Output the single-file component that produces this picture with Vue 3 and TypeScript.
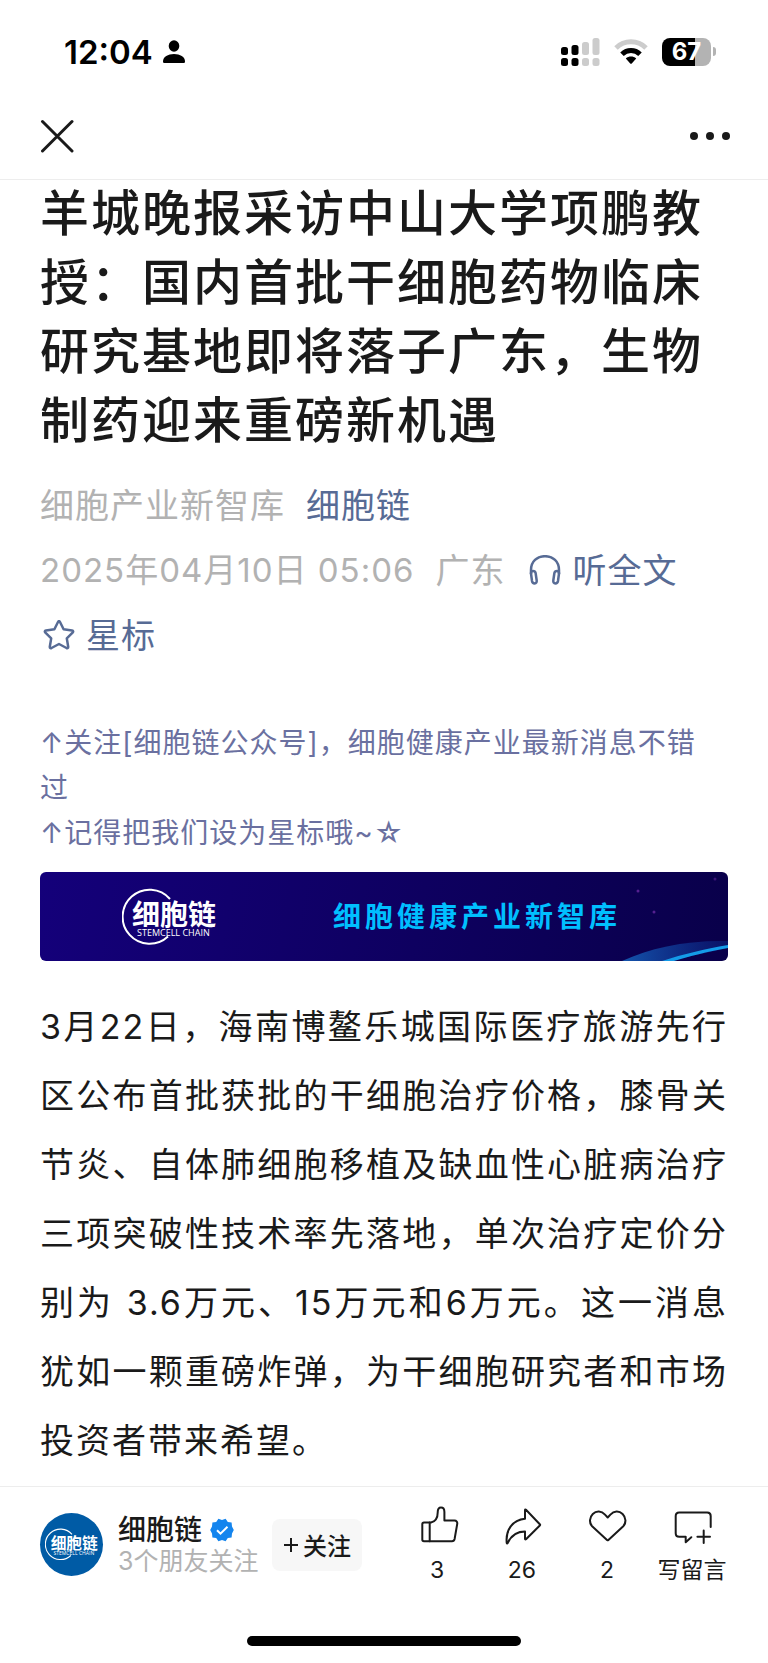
<script setup lang="ts">
import { ref } from 'vue'

interface Action {
  id: string
  label: string
  caption: string
  paths: string[]
}

const titleText = '羊城晚报采访中山大学项鹏教授：国内首批干细胞药物临床研究基地即将落子广东，生物制药迎来重磅新机遇'
const notes: string[] = [
  '↑关注[细胞链公众号]，细胞健康产业最新消息不错',
  '过',
  '↑记得把我们设为星标哦~☆',
]
const bodyText =
  '3月22日，海南博鳌乐城国际医疗旅游先行区公布首批获批的干细胞治疗价格，膝骨关节炎、自体肺细胞移植及缺血性心脏病治疗三项突破性技术率先落地，单次治疗定价分别为 3.6万元、15万元和6万元。这一消息犹如一颗重磅炸弹，为干细胞研究者和市场投资者带来希望。'

const actions: Action[] = [
  {
    id: 'like',
    label: '赞',
    caption: '3',
    paths: [
      'M7 16.500H14C18 15.500 20.700 12 20.700 6.500C20.700 3 22 1.600 24 1.600C26.200 1.600 27.400 3.400 27.400 6V14.600H37.500C39.500 14.600 40.600 16 40.200 18L37.600 33C37.300 34.500 36.400 35.200 35 35.200H7C5.900 35.200 5.300 34.600 5.300 33.500V18.200C5.300 17.100 5.900 16.500 7 16.500Z',
      'M12.700 16.500V35.200',
    ],
  },
  {
    id: 'share',
    label: '分享',
    caption: '26',
    paths: [
      'M23 4.200C23 3.400 23.500 3.300 24 3.800L37.800 18.200C38.300 18.700 38.300 19 37.800 19.500L24 33.300C23.500 33.700 23 33.500 23 32.800V25.400C15 25.400 9.500 28.500 5.700 37C5.300 37.800 4.800 37.600 4.700 36.800C3.500 24 10.500 14 23 12.800Z',
    ],
  },
  {
    id: 'wow',
    label: '推荐',
    caption: '2',
    paths: [
      'M20.700 11.500L18 8.600C14.500 4.800 9.300 4.600 5.800 8C2.200 11.600 2 17 5.400 20.600L20 34C20.500 34.400 20.900 34.400 21.400 34L36 20.600C39.400 17 39.200 11.600 35.600 8C32.100 4.600 26.900 4.800 23.400 8.600Z',
    ],
  },
  {
    id: 'comment',
    label: '写留言',
    caption: '写留言',
    paths: [
      'M38.700 21V10C38.700 7.800 37.500 6.500 35.300 6.500H7.200C5 6.500 3.700 7.800 3.700 10V27.300C3.700 29.500 5 30.800 7.200 30.800H13.700V36.200L19.300 31.200',
      'M31.700 24.500V37M25.400 30.800H38',
    ],
  },
]

const starred = ref(false)
const following = ref(false)
</script>

<template>
  <div class="page" lang="zh-CN">
    <header class="top">
      <div class="status">
        <div class="status-left">
          <time class="clock">12:04</time>
          <svg class="person" viewBox="0 0 22 24" aria-hidden="true">
            <ellipse cx="11" cy="6" rx="5.3" ry="5.8" />
            <path d="M0 21.5C0 16.8 5 14 11 14S22 16.8 22 21.5C22 22.6 21.4 23 20.4 23H1.6C.6 23 0 22.6 0 21.5Z" />
          </svg>
        </div>
        <div class="status-right">
          <svg class="signal" viewBox="0 0 40 28" aria-hidden="true">
            <g>
              <rect x="1" y="9" width="7" height="8" rx="2.5" />
              <rect x="11.5" y="7" width="7" height="10" rx="2.5" />
              <rect x="1" y="20" width="7" height="8" rx="2.5" />
              <rect x="11.5" y="20" width="7" height="8" rx="2.5" />
            </g>
            <g class="dim">
              <rect x="22" y="4" width="7" height="13" rx="2.5" />
              <rect x="32.5" y="0" width="7" height="17" rx="2.5" />
              <rect x="22" y="20" width="7" height="8" rx="2.5" />
              <rect x="32.5" y="20" width="7" height="8" rx="2.5" />
            </g>
          </svg>
          <svg class="wifi" viewBox="0 0 34 26" aria-hidden="true">
            <path class="arc dim-arc" d="M2 9C10.5 .8 23.5 .8 32 9" />
            <path class="arc" d="M8 15.2C13 10.3 21 10.3 26 15.2" />
            <path d="M11.8 19.5C14.8 16.9 19.2 16.9 22.2 19.5L18 24.3C17.4 25 16.6 25 16 24.3Z" />
          </svg>
          <span class="battery"><span class="charge">67</span><i class="nub"></i></span>
        </div>
      </div>
      <nav class="nav">
        <button type="button" aria-label="关闭">
          <svg class="close" viewBox="0 0 34 34" aria-hidden="true"><path d="M2.5 2.500L32 32M32 2.500L2.5 32" /></svg>
        </button>
        <button type="button" aria-label="更多">
          <svg class="more" viewBox="0 0 40 10" aria-hidden="true">
            <circle cx="4" cy="5" r="4" /><circle cx="20" cy="5" r="4" /><circle cx="36" cy="5" r="4" />
          </svg>
        </button>
      </nav>
    </header>

    <main class="article">
      <h1 class="title">{{ titleText }}</h1>

      <div class="meta">
        <span>细胞产业新智库</span>
        <a href="#account">细胞链</a>
        <i class="line-end"></i>
        <time class="published">2025年04月10日 05:06</time>
        <span>广东</span>
        <button type="button" class="meta-btn">
          <svg class="meta-icon" viewBox="0 0 32 32" aria-hidden="true">
            <path d="M2 19V15C2 6.500 8 1.200 16 1.200S30 6.500 30 15V19" />
            <path d="M2 18.500Q2 16 4 16Q6.200 16 6.600 18L7.700 25.500Q8 28.200 5.600 28.400Q3.400 28.400 3 26Z" />
            <path d="M30 18.500Q30 16 28 16Q25.800 16 25.400 18L24.300 25.500Q24 28.200 26.400 28.400Q28.600 28.400 29 26Z" />
          </svg>
          听全文
        </button>
        <button type="button" class="meta-btn" :aria-pressed="starred" @click="starred = !starred">
          <svg class="meta-icon" :class="{ filled: starred }" viewBox="2 3 32 32" aria-hidden="true">
            <path d="M17 5Q18 3.200 19 5L22.600 12.200L31 13.500Q33 14 31.600 15.600L25.800 21.400L27.200 29.800Q27.300 31.800 25.500 31L18 27L10.500 31Q8.700 31.800 8.800 29.800L10.200 21.400L4.400 15.600Q3 14 5 13.500L13.400 12.200Z" />
          </svg>
          星标
        </button>
      </div>

      <div class="notes">
        <p v-for="note in notes" :key="note">{{ note }}</p>
      </div>

      <section class="banner">
        <svg class="streak" viewBox="0 0 120 89" aria-hidden="true">
          <defs>
            <linearGradient id="glow" x1="0" y1="0" x2="1" y2="0">
              <stop offset="0" stop-color="#1560b8" stop-opacity="0.9" />
              <stop offset="1" stop-color="#0c2c90" stop-opacity="0.4" />
            </linearGradient>
          </defs>
          <path d="M14 89C42 76 78 68 120 69V76L60 89Z" fill="url(#glow)" />
          <path d="M54 89C76 82 96 77 120 73V76C98 80 82 84 66 89Z" fill="#149be8" />
          <circle cx="30" cy="19" r="1.5" fill="#552090" />
          <circle cx="46" cy="40" r="1.5" fill="#552090" />
          <circle cx="107" cy="7" r="1.5" fill="#3a1478" />
        </svg>
        <svg class="brand" viewBox="0 0 96 58" role="img" aria-label="细胞链 STEMCELL CHAIN">
          <path d="M48 11A27 27 0 1 0 46 48.5" />
          <text class="brand-name" x="10" y="37">细胞链</text>
          <text class="brand-sub" x="15" y="48">STEMCELL CHAIN</text>
        </svg>
        <p class="slogan">细胞健康产业新智库</p>
      </section>

      <p class="body">{{ bodyText }}</p>
    </main>

    <footer class="bottom">
      <div class="bar">
        <span class="avatar">
          <svg class="brand" viewBox="0 0 96 58" aria-hidden="true">
            <path d="M48 11A27 27 0 1 0 46 48.5" />
            <text class="brand-name" x="10" y="37">细胞链</text>
            <text class="brand-sub" x="15" y="48">STEMCELL CHAIN</text>
          </svg>
        </span>
        <div class="account">
          <div class="name">
            细胞链
            <svg class="verified" viewBox="0 0 24 24" aria-hidden="true">
              <path class="seal" d="M12 2L15.600 .8L17.800 4L21.600 4.400L22 8.400L23.800 12L22 15.600L21.600 19.600L17.800 20L15.600 23.200L12 22L8.400 23.200L6.200 20L2.400 19.600L2 15.600L.2 12L2 8.400L2.400 4.400L6.200 4L8.400 .8Z" />
              <path class="tick" d="M7 12.200L10.500 15.700L17.500 8.800" />
            </svg>
          </div>
          <div class="friends">3个朋友关注</div>
        </div>
        <button type="button" class="follow" :aria-pressed="following" @click="following = !following">
          <svg class="plus" viewBox="0 0 14 14" aria-hidden="true"><path d="M7 0V14M0 7H14" /></svg>
          关注
        </button>
        <div class="actions">
          <button v-for="a in actions" :key="a.id" type="button" class="action" :aria-label="a.label">
            <svg class="action-icon" viewBox="0 0 40 40" aria-hidden="true">
              <path v-for="d in a.paths" :key="d" :d="d" />
            </svg>
            <span>{{ a.caption }}</span>
          </button>
        </div>
      </div>
      <div class="home"><i></i></div>
    </footer>
  </div>
</template>

<style>
body {
  background: #fff;
}
</style>

<style scoped>
.page {
  min-height: 100vh;
  display: flex;
  flex-direction: column;
  background: #fff;
  color: #1a1a1a;
  font-family: Inter, "Noto Sans CJK SC", sans-serif;
}
h1, p {
  margin: 0;
}
button {
  margin: 0;
  padding: 0;
  border: 0;
  background: none;
  color: inherit;
  font: inherit;
  letter-spacing: inherit;
  cursor: pointer;
}
svg {
  display: block;
  flex: none;
}

.top {
  box-shadow: 0 1px 0 #ededed;
}
.status {
  box-sizing: border-box;
  height: 93px;
  padding: 10px 52px 0 64px;
  display: flex;
  align-items: center;
  justify-content: space-between;
  color: #000;
}
.status-left {
  display: flex;
  align-items: center;
  gap: 10px;
}
.clock {
  font-size: 33px;
  line-height: 40px;
  font-weight: 600;
}
.person {
  width: 22px;
  height: 24px;
}
.status-right {
  display: flex;
  align-items: center;
  gap: 14px;
}
.signal {
  width: 40px;
  height: 28px;
}
.dim {
  fill: #ccc;
}
.wifi {
  width: 34px;
  height: 26px;
}
.arc {
  fill: none;
  stroke: #000;
  stroke-width: 5;
}
.dim-arc {
  stroke: #ccc;
}
.battery {
  display: flex;
  align-items: center;
  gap: 2px;
}
.charge {
  width: 49px;
  height: 28px;
  border-radius: 8px;
  background: linear-gradient(90deg, #000 67%, #b3b3b3 67%);
  color: #fff;
  font-size: 24px;
  line-height: 28px;
  font-weight: 700;
  text-align: center;
}
.nub {
  width: 3px;
  height: 9px;
  border-radius: 0 3px 3px 0;
  background: #b3b3b3;
}
.nav {
  height: 86px;
  padding: 0 38px 0 40px;
  display: flex;
  align-items: center;
  justify-content: space-between;
}
.close {
  width: 34px;
  height: 34px;
  fill: none;
  stroke: #1a1a1a;
  stroke-width: 3;
  stroke-linecap: round;
}
.more {
  width: 40px;
  height: 10px;
  fill: #1a1a1a;
}

.article {
  padding: 0 40px;
}
.title {
  font-size: 49px;
  line-height: 69px;
  font-weight: 500;
  letter-spacing: 2px;
}
.meta {
  margin-top: 18px;
  display: flex;
  flex-wrap: wrap;
  column-gap: 21px;
  font-size: 34px;
  line-height: 65px;
  letter-spacing: 1px;
  color: #b2b2b2;
}
.line-end {
  flex-basis: 100%;
}
.published {
  font-size: 33px;
}
.meta a,
.meta-btn {
  color: #576b95;
  text-decoration: none;
}
.meta-btn {
  padding-left: 3px;
  display: flex;
  align-items: center;
  gap: 11px;
}
.meta-icon {
  width: 32px;
  height: 32px;
  fill: none;
  stroke: currentColor;
  stroke-width: 2.5;
  stroke-linejoin: round;
}
.meta-icon.filled {
  fill: currentColor;
}
.notes {
  margin-top: 53px;
  font-size: 28px;
  line-height: 45px;
  letter-spacing: 1px;
  color: #6a70a0;
}
.banner {
  position: relative;
  margin-top: 16px;
  height: 89px;
  border-radius: 6px;
  overflow: hidden;
  display: flex;
  align-items: center;
  background: linear-gradient(100deg, #14007a, #0e0060 55%, #09004a);
}
.streak {
  position: absolute;
  right: 0;
  bottom: 0;
  width: 120px;
  height: 89px;
}
.brand {
  width: 96px;
  height: 58px;
}
.banner .brand {
  margin-left: 82px;
}
.brand path {
  fill: none;
  stroke: #fff;
  stroke-width: 2;
}
.brand text {
  fill: #fff;
}
.brand-name {
  font: 700 28px "Noto Sans CJK SC", sans-serif;
}
.brand-sub {
  font: 9px "Open Sans", sans-serif;
}
.slogan {
  margin-left: 115px;
  font-size: 28px;
  line-height: 40px;
  font-weight: 700;
  letter-spacing: 4px;
  color: #00bfff;
}
.body {
  margin-top: 31px;
  font-size: 34px;
  line-height: 69px;
  letter-spacing: 2px;
  text-align: justify;
}

.bottom {
  margin-top: auto;
  border-top: 1px solid #ededed;
}
.bar {
  height: 115px;
  padding: 0 40px;
  display: flex;
  align-items: center;
}
.avatar {
  flex: none;
  width: 63px;
  height: 63px;
  border-radius: 50%;
  background: #005ba5;
  display: flex;
  align-items: center;
  justify-content: center;
}
.avatar .brand {
  width: 54px;
  height: 33px;
}
.account {
  margin-left: 15px;
  white-space: nowrap;
}
.name {
  display: flex;
  align-items: center;
  gap: 8px;
  font-size: 28px;
  line-height: 32px;
  font-weight: 500;
}
.verified {
  width: 24px;
  height: 24px;
}
.seal {
  fill: #1485ee;
}
.tick {
  fill: none;
  stroke: #fff;
  stroke-width: 2;
}
.friends {
  font-size: 25px;
  line-height: 30px;
  color: #b2b2b2;
}
.follow {
  flex: none;
  margin-left: 14px;
  width: 90px;
  height: 52px;
  border-radius: 8px;
  background: #f7f7f7;
  display: flex;
  align-items: center;
  justify-content: center;
  gap: 5px;
  font-size: 24px;
  font-weight: 500;
}
.plus {
  width: 14px;
  height: 14px;
  stroke: #1a1a1a;
  stroke-width: 2;
}
.actions {
  margin-left: auto;
  display: grid;
  grid-template-columns: repeat(4, 72px);
  column-gap: 13px;
}
.action {
  display: flex;
  flex-direction: column;
  align-items: center;
  gap: 10px;
  font-size: 23px;
  line-height: 28px;
}
.action-icon {
  width: 40px;
  height: 40px;
  overflow: visible;
  fill: none;
  stroke: #1a1a1a;
  stroke-width: 2;
  stroke-linejoin: round;
  stroke-linecap: round;
}
.home {
  height: 61px;
  display: flex;
  align-items: flex-end;
  justify-content: center;
}
.home i {
  width: 274px;
  height: 10px;
  margin-bottom: 17px;
  border-radius: 5px;
  background: #000;
}
</style>
